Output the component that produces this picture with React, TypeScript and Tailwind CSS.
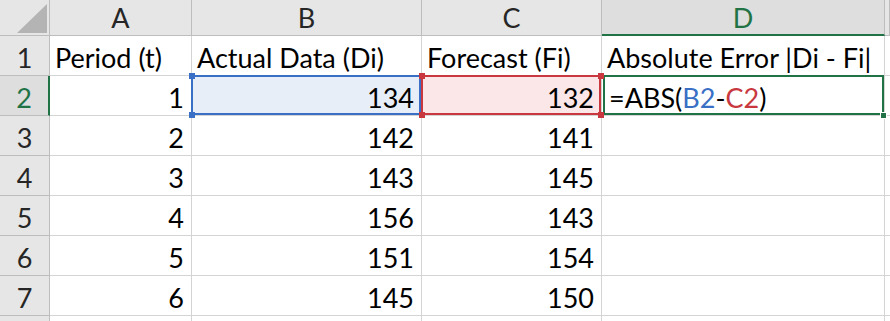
import React from 'react'

const rows: (string | number)[][] = [
  ['Period (t)', 'Actual Data (Di)', 'Forecast (Fi)', 'Absolute Error |Di - Fi|'],
  [1, 134, 132, ''],
  [2, 142, 141, ''],
  [3, 143, 145, ''],
  [4, 156, 143, ''],
  [5, 151, 154, ''],
  [6, 145, 150, ''],
  ['', '', '', ''],
]

const cols = ['A', 'B', 'C', 'D', '']

function Handle({ pos, color }: { pos: string; color: string }) {
  return <span className={`absolute w-[6px] h-[6px] ${pos} ${color}`} />
}

export default function App() {
  return (
    <div
      className="w-[890px] h-[321px] overflow-hidden bg-white text-[27px] leading-none text-black"
      style={{ fontFamily: 'Lato, "Liberation Sans", sans-serif' }}
    >
      <div className="grid grid-cols-[50px_142px_230px_180px_283px_1fr] grid-rows-[36px_repeat(8,40px)]">
        {/* corner */}
        <div className="relative bg-[#e6e6e6] border-r border-b border-[#bdbdbd]">
          <svg className="absolute left-0 top-0" width="50" height="36">
            <polygon points="17,33 47,33 47,4" fill="#b4b4b4" />
          </svg>
        </div>

        {/* column headers */}
        {cols.map((c, i) =>
          c === 'D' ? (
            <div
              key={i}
              className="flex items-center justify-center bg-[#dedede] text-[#217346] border-r border-[#bdbdbd] border-b-2 border-b-[#217346]"
            >
              {c}
            </div>
          ) : (
            <div
              key={i}
              className="flex items-center justify-center bg-[#e6e6e6] text-[#262626] border-r border-b border-[#bdbdbd]"
            >
              {c}
            </div>
          )
        )}

        {rows.map((r, ri) => (
          <React.Fragment key={ri}>
            {ri === 1 ? (
              <div className="flex items-center justify-center bg-[#dedede] text-[#217346] border-b border-[#bdbdbd] border-r-2 border-r-[#217346] pt-1">
                {ri + 1}
              </div>
            ) : (
              <div className="flex items-center justify-center bg-[#e6e6e6] text-[#262626] border-r border-b border-[#bdbdbd] pt-1">
                {ri < 7 ? ri + 1 : ''}
              </div>
            )}

            {r.map((v, ci) => {
              const num = typeof v === 'number'
              const base = `relative flex items-center pt-1 border-r border-b border-[#d4d4d4] ${
                num ? 'justify-end pr-[7px]' : 'pl-[5px]'
              }`

              if (ri === 1 && ci === 1) {
                return (
                  <div key={ci} className={`${base} bg-[#e8eef8]`}>
                    <div className="absolute z-10 -top-px -left-px w-[calc(100%+1px)] h-[calc(100%+1px)] border-2 border-[#3a6fc6]" />
                    <Handle pos="-top-[3px] -left-[3px] z-20" color="bg-[#3a6fc6]" />
                    <Handle pos="-bottom-[3px] -left-[3px] z-20" color="bg-[#3a6fc6]" />
                    <span className="relative z-20">{v}</span>
                  </div>
                )
              }
              if (ri === 1 && ci === 2) {
                return (
                  <div key={ci} className={`${base} bg-[#fbe7e8]`}>
                    <div className="absolute z-10 -top-px -left-px w-[calc(100%+1px)] h-[calc(100%+1px)] border-2 border-[#c8383e]" />
                    <Handle pos="-top-[3px] -left-[3px] z-20" color="bg-[#c8383e]" />
                    <Handle pos="-bottom-[3px] -left-[3px] z-20" color="bg-[#c8383e]" />
                    <Handle pos="-top-[3px] -right-[3px] z-20" color="bg-[#c8383e]" />
                    <Handle pos="-bottom-[3px] -right-[3px] z-20" color="bg-[#c8383e]" />
                    <span className="relative z-20">{v}</span>
                  </div>
                )
              }
              if (ri === 1 && ci === 3) {
                return (
                  <div key={ci} className={`${base} bg-white`}>
                    <div className="absolute z-10 -top-px left-[1px] w-[calc(100%-1px)] h-[calc(100%+1px)] border-2 border-[#217346]" />
                    <span className="absolute z-20 -bottom-[4px] -right-[3px] w-[7px] h-[7px] bg-[#217346] border border-white" />
                    <span className="relative z-20 pl-[2px]">
                      =ABS(<span className="text-[#3a6fc6]">B2</span>-
                      <span className="text-[#c8383e]">C2</span>)
                    </span>
                  </div>
                )
              }
              return (
                <div key={ci} className={base}>
                  {v}
                </div>
              )
            })}
            <div className="border-b border-[#d4d4d4]" />
          </React.Fragment>
        ))}
      </div>
    </div>
  )
}
